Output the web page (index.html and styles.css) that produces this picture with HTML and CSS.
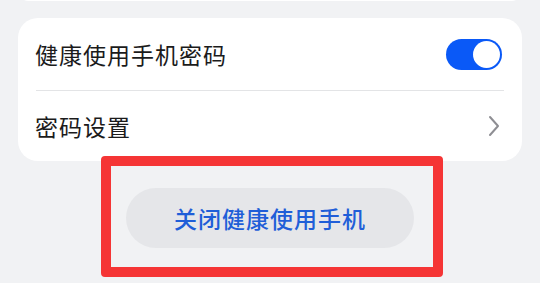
FILE: index.html
```html
<!DOCTYPE html>
<html lang="zh-CN">
<head>
    <meta charset="UTF-8">
    <meta name="viewport" content="width=device-width, initial-scale=1.0">
    <link rel="stylesheet" href="styles.css">
    <title>健康使用手机</title>
</head>
<body>
    <div class="card card-prev"></div>

    <div class="card">
        <div class="row">
            <span class="label">健康使用手机密码</span>
            <span class="switch on"><span class="knob"></span></span>
        </div>
        <div class="divider"></div>
        <div class="row row-link">
            <span class="label">密码设置</span>
            <svg class="chevron" width="12" height="22" viewBox="0 0 12 22">
                <path d="M2 2 L10 11 L2 20" fill="none" stroke="#8e8e93" stroke-width="2" stroke-linecap="round" stroke-linejoin="round"/>
            </svg>
        </div>
    </div>

    <div class="actions">
        <button class="btn-close">关闭健康使用手机</button>
        <div class="highlight"></div>
    </div>
</body>
</html>
```

FILE: styles.css
```css
*{
    margin: 0;
    padding: 0;
    box-sizing: border-box;
}

body{
    background: #f1f2f4;
    font-family: "Noto Sans CJK SC", "Noto Sans", sans-serif;
    color: #1b1b1b;
    width: 540px;
    height: 283px;
    overflow: hidden;
}

.card{
    background: #fff;
    border-radius: 20px;
    margin: 17px 18px 0;
}

.card-prev{
    margin-top: -20px;
    height: 21px;
}

.row{
    height: 72px;
    padding: 0 20px 0 17px;
    display: flex;
    align-items: center;
    justify-content: space-between;
}

.row-link{
    height: 70px;
    padding-right: 22px;
}

.label{
    font-size: 23px;
    line-height: 1;
    letter-spacing: 1px;
}

.divider{
    height: 1px;
    background: #e3e4e6;
    margin: 0 18px;
}

.switch{
    width: 56px;
    height: 31px;
    border-radius: 16px;
    background: #0a59f7;
    display: flex;
    align-items: center;
    justify-content: flex-end;
    padding-right: 2px;
}

.knob{
    width: 27px;
    height: 27px;
    border-radius: 50%;
    background: #fff;
}

.chevron{
    display: block;
}

.actions{
    position: relative;
    display: flex;
    justify-content: center;
    padding-top: 27px;
}

.btn-close{
    width: 288px;
    height: 60px;
    border: none;
    border-radius: 30px;
    background: #e5e6e9;
    color: #1f5ed8;
    font-family: "Noto Sans CJK SC", "Noto Sans", sans-serif;
    font-size: 23px;
    font-weight: 500;
    letter-spacing: 1px;
}

.highlight{
    position: absolute;
    left: 101px;
    top: -5px;
    width: 342px;
    height: 121px;
    border: 10px solid #f53535;
    border-radius: 4px;
}
```
